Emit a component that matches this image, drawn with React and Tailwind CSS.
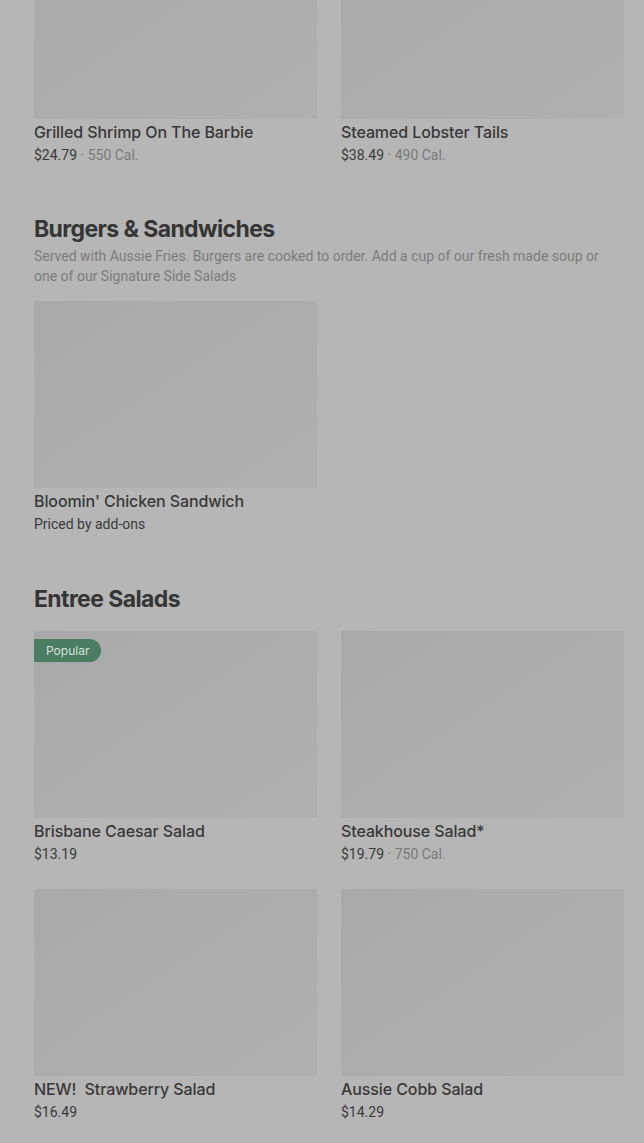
const sections = [
  {
    items: [
      { name: 'Grilled Shrimp On The Barbie', price: '$24.79', cal: '550 Cal.' },
      { name: 'Steamed Lobster Tails', price: '$38.49', cal: '490 Cal.' },
    ],
  },
  {
    title: 'Burgers & Sandwiches',
    gap: 'mt-[48px]',
    desc: 'Served with Aussie Fries. Burgers are cooked to order. Add a cup of our fresh made soup or one of our Signature Side Salads',
    items: [{ name: "Bloomin' Chicken Sandwich", price: 'Priced by add-ons' }],
  },
  {
    title: 'Entree Salads',
    gap: 'mt-[49px]',
    items: [
      { name: 'Brisbane Caesar Salad', price: '$13.19', popular: true },
      { name: 'Steakhouse Salad*', price: '$19.79', cal: '750 Cal.' },
      { name: 'NEW!  Strawberry Salad', price: '$16.49' },
      { name: 'Aussie Cobb Salad', price: '$14.29' },
    ],
  },
];

function Card({ item }) {
  return (
    <div className="flex flex-col">
      <div className="relative h-[187px] bg-gradient-to-br from-[#a9a9a9] to-[#b0b0b0]">
        {item.popular && (
          <span className="absolute left-0 top-2 h-[23px] pl-3 pr-3 flex items-center rounded-r-full bg-[#4b7d62] text-[#d6e2da] text-[12px] font-['Inter',sans-serif]">
            Popular
          </span>
        )}
      </div>
      <div className="mt-[2px] text-[16px] leading-[22px] font-medium tracking-[-0.1px] text-[#383838] whitespace-pre font-['Inter',sans-serif]">
        {item.name}
      </div>
      <div className="mt-[2px] text-[14px] leading-[20px] text-[#3a3a3a] font-['Roboto',sans-serif]">
        {item.price}
        {item.cal && <span className="text-[#7a7a7a]"> · {item.cal}</span>}
      </div>
    </div>
  );
}

export default function App() {
  return (
    <div className="min-h-[1143px] bg-[#b6b6b6] pl-[34px] pr-[20px] overflow-hidden">
      <div className="-mt-[68px] flex flex-col">
        {sections.map((s, i) => (
          <div key={i} className={s.gap || ''}>
            {s.title && (
              <h2 className="text-[23px] leading-[32px] font-bold tracking-[-0.6px] text-[#353535] font-['Inter',sans-serif]">
                {s.title}
              </h2>
            )}
            {s.desc && (
              <p className="mt-[1px] text-[14px] leading-[20px] text-[#7c7c7c] font-['Roboto',sans-serif]">
                {s.desc}
              </p>
            )}
            <div
              className={`grid grid-cols-2 gap-x-6 gap-y-[25px] ${
                s.desc ? 'mt-[15px]' : s.title ? 'mt-[16px]' : ''
              }`}
            >
              {s.items.map((it) => (
                <Card key={it.name} item={it} />
              ))}
            </div>
          </div>
        ))}
      </div>
    </div>
  );
}
